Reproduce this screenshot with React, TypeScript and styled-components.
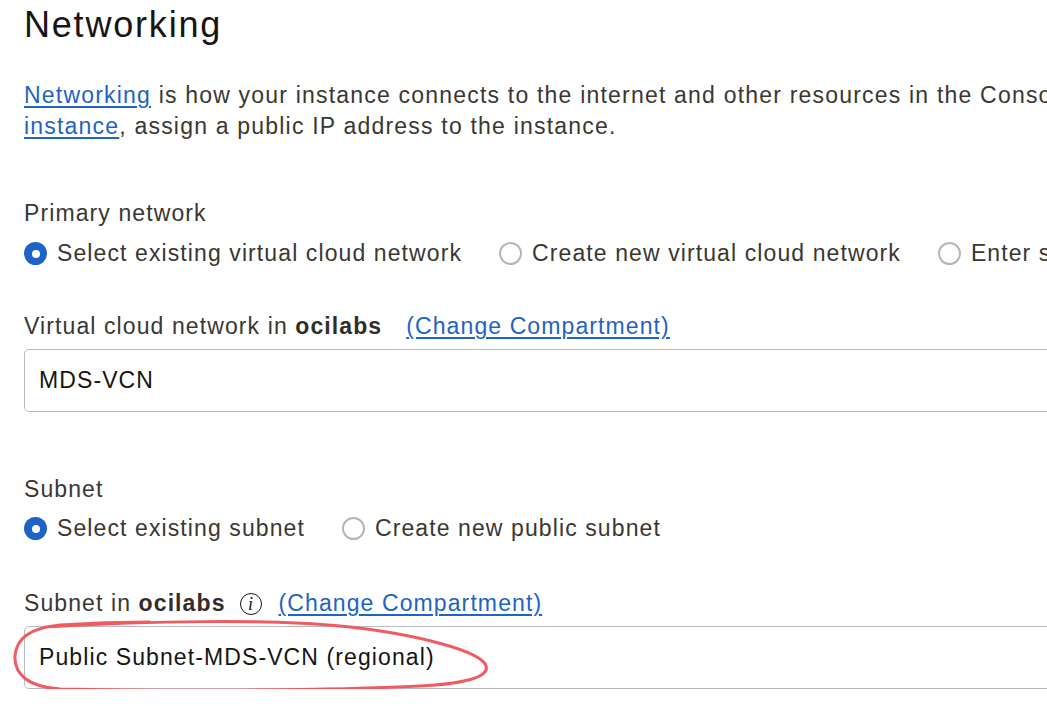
import React from "react";
import styled, { createGlobalStyle } from "styled-components";

const Global = createGlobalStyle`
  html, body {
    margin: 0;
    padding: 0;
    background: #ffffff;
    overflow: hidden;
  }
  body {
    font-family: "Liberation Sans", Arial, Helvetica, sans-serif;
  }
`;

const Page = styled.main`
  width: 1400px;
  padding: 5px 0 0 24px;
  color: #3a3733;
  font-size: 23px;
  letter-spacing: 1.1px;
  line-height: 31px;
`;

const Title = styled.h1`
  margin: 0;
  font-size: 36px;
  line-height: 40px;
  font-weight: 400;
  letter-spacing: 1.8px;
  color: #161513;
`;

const Intro = styled.p`
  margin: 35px 0 0;
  white-space: nowrap;
  letter-spacing: 1.2px;
`;

const Link = styled.a`
  color: #1f63c4;
  text-decoration: underline;
  text-decoration-thickness: 1.5px;
  text-underline-offset: 3px;
  cursor: pointer;
`;

const Section = styled.section<{ $gap: number }>`
  margin-top: ${(p) => p.$gap}px;
`;

const GroupLabel = styled.div`
  color: #3a3733;
`;

const RadioRow = styled.div<{ $gap: number }>`
  display: flex;
  align-items: center;
  gap: 37px;
  margin-top: ${(p) => p.$gap}px;
  white-space: nowrap;
`;

const RadioOption = styled.label`
  display: flex;
  align-items: center;
  gap: 10px;
  cursor: pointer;
`;

const RadioDot = styled.span<{ $on?: boolean }>`
  position: relative;
  box-sizing: border-box;
  width: 23px;
  height: 23px;
  flex: 0 0 23px;
  border-radius: 50%;
  background: ${(p) => (p.$on ? "#1d63c8" : "#ffffff")};
  border: ${(p) => (p.$on ? "none" : "2px solid #b1b6bc")};
  &::after {
    content: "";
    display: ${(p) => (p.$on ? "block" : "none")};
    position: absolute;
    left: 50%;
    top: 50%;
    width: 8px;
    height: 8px;
    margin: -4px 0 0 -4px;
    border-radius: 50%;
    background: #ffffff;
  }
`;

const FieldLabel = styled.div`
  display: flex;
  align-items: center;
  white-space: nowrap;
`;

const Strong = styled.b`
  font-weight: 700;
  color: #312d2a;
`;

const LabelLink = styled(Link)<{ $ml: number }>`
  margin-left: ${(p) => p.$ml}px;
`;

const InfoIcon = styled.span`
  box-sizing: border-box;
  display: inline-flex;
  align-items: center;
  justify-content: center;
  width: 22px;
  height: 22px;
  flex: 0 0 22px;
  margin-left: 14px;
  border: 1.7px solid #161513;
  border-radius: 50%;
  font-family: "Liberation Serif", "Times New Roman", serif;
  font-style: italic;
  font-weight: 400;
  font-size: 18px;
  line-height: 1;
  letter-spacing: 0;
  color: #161513;
`;

const FieldWrap = styled.div`
  position: relative;
  margin-top: 7px;
`;

const Select = styled.div`
  box-sizing: border-box;
  display: flex;
  align-items: center;
  height: 63px;
  padding: 0 0 0 14px;
  border: 1.5px solid #b7bbc0;
  border-radius: 5px;
  background: #ffffff;
  color: #161513;
`;

const Annotation = styled.svg`
  position: absolute;
  left: -24px;
  top: -14px;
  pointer-events: none;
  overflow: visible;
`;

export default function App() {
  return (
    <>
      <Global />
      <Page>
        <Title>Networking</Title>
        <Intro>
          <Link>Networking</Link> is how your instance connects to the internet
          and other resources in the Console. To make sure you can connect to
          your
          <br />
          <Link>instance</Link>, assign a public IP address to the instance.
        </Intro>

        <Section $gap={56}>
          <GroupLabel>Primary network</GroupLabel>
          <RadioRow $gap={9}>
            <RadioOption>
              <RadioDot $on />
              Select existing virtual cloud network
            </RadioOption>
            <RadioOption>
              <RadioDot />
              Create new virtual cloud network
            </RadioOption>
            <RadioOption>
              <RadioDot />
              Enter subnet OCID
            </RadioOption>
          </RadioRow>
        </Section>

        <Section $gap={42}>
          <FieldLabel>
            Virtual cloud network in&nbsp;<Strong>ocilabs</Strong>
            <LabelLink $ml={24}>(Change Compartment)</LabelLink>
          </FieldLabel>
          <FieldWrap>
            <Select>MDS-VCN</Select>
          </FieldWrap>
        </Section>

        <Section $gap={62}>
          <GroupLabel>Subnet</GroupLabel>
          <RadioRow $gap={8}>
            <RadioOption>
              <RadioDot $on />
              Select existing subnet
            </RadioOption>
            <RadioOption>
              <RadioDot />
              Create new public subnet
            </RadioOption>
          </RadioRow>
        </Section>

        <Section $gap={44}>
          <FieldLabel>
            Subnet in&nbsp;<Strong>ocilabs</Strong>
            <InfoIcon>i</InfoIcon>
            <LabelLink $ml={17}>(Change Compartment)</LabelLink>
          </FieldLabel>
          <FieldWrap>
            <Select>Public Subnet-MDS-VCN (regional)</Select>
            <Annotation width="500" height="90" viewBox="0 0 500 90">
              <path
                d="M 45 15 C 150 9, 270 7, 340 14 C 420 22, 482 40, 486 54 C 490 66, 460 72, 420 74 C 320 79, 160 79, 60 77 C 28 75, 14 62, 15 44 C 16 28, 28 16, 60 13 C 90 11, 120 10, 150 10"
                fill="none"
                stroke="#f15a60"
                strokeWidth="3"
                strokeLinecap="round"
              />
            </Annotation>
          </FieldWrap>
        </Section>
      </Page>
    </>
  );
}
